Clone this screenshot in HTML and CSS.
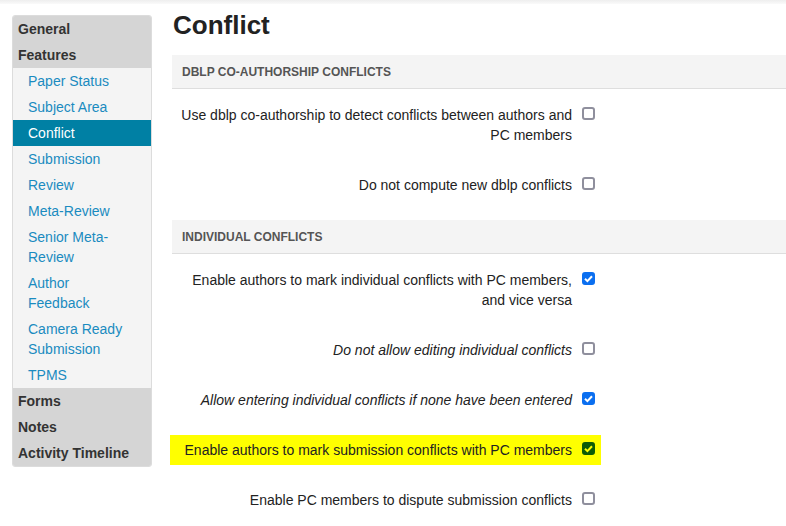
FILE: index.html
```html
<!DOCTYPE html>
<html lang="en">
<head>
  <meta charset="UTF-8" />
  <title>Conflict settings</title>
  <link rel="stylesheet" href="styles.css">
</head>
<body>

  <div class="topbar"></div>

  <div class="page">

    <!-- Settings navigation -->
    <ul class="sidenav">
      <li class="group">General</li>
      <li class="group">Features</li>
      <li class="item"><a href="#">Paper Status</a></li>
      <li class="item"><a href="#">Subject Area</a></li>
      <li class="item active"><a href="#">Conflict</a></li>
      <li class="item"><a href="#">Submission</a></li>
      <li class="item"><a href="#">Review</a></li>
      <li class="item"><a href="#">Meta-Review</a></li>
      <li class="item"><a href="#">Senior Meta-Review</a></li>
      <li class="item"><a href="#">Author Feedback</a></li>
      <li class="item"><a href="#">Camera Ready Submission</a></li>
      <li class="item"><a href="#">TPMS</a></li>
      <li class="group">Forms</li>
      <li class="group">Notes</li>
      <li class="group">Activity Timeline</li>
    </ul>

    <!-- Main settings -->
    <div class="main">
      <h1>Conflict</h1>

      <div class="section">
        <div class="section-head">DBLP Co-Authorship Conflicts</div>
        <div class="row">
          <label class="label">Use dblp co-authorship to detect conflicts between authors and PC members</label>
          <span class="check"></span>
        </div>
        <div class="row">
          <label class="label">Do not compute new dblp conflicts</label>
          <span class="check"></span>
        </div>
      </div>

      <div class="section">
        <div class="section-head">Individual Conflicts</div>
        <div class="row">
          <label class="label">Enable authors to mark individual conflicts with PC members, and vice versa</label>
          <span class="check on"><svg viewBox="0 0 13 13"><path d="M3 6.8l2.4 2.3L10 4.2"/></svg></span>
        </div>
        <div class="row">
          <label class="label sub">Do not allow editing individual conflicts</label>
          <span class="check"></span>
        </div>
        <div class="row">
          <label class="label sub">Allow entering individual conflicts if none have been entered</label>
          <span class="check on"><svg viewBox="0 0 13 13"><path d="M3 6.8l2.4 2.3L10 4.2"/></svg></span>
        </div>
        <div class="row">
          <div class="mark">
            <label class="label">Enable authors to mark submission conflicts with PC members</label>
            <span class="check on green"><svg viewBox="0 0 13 13"><path d="M3 6.8l2.4 2.3L10 4.2"/></svg></span>
          </div>
        </div>
        <div class="row">
          <label class="label">Enable PC members to dispute submission conflicts</label>
          <span class="check"></span>
        </div>
      </div>
    </div>

  </div>

</body>
</html>
```

FILE: styles.css
```css
/* Global */
body {
  margin: 0;
  font-family: "Liberation Sans", Arial, sans-serif;
  font-size: 14px;
  color: #333;
  background: #fff;
  overflow: hidden;
}
.topbar {
  height: 4px;
  background: linear-gradient(#eeeeee, #fafafa);
}
.page {
  display: flex;
  align-items: flex-start;
  gap: 20px;
  padding: 6px 0 0 12px;
}
/* Side navigation */
.sidenav {
  list-style: none;
  margin: 5px 0 0;
  padding: 0;
  width: 140px;
  box-sizing: border-box;
  border: 1px solid #dcdcdc;
  border-radius: 3px;
  background: #f4f4f4;
  overflow: hidden;
  flex-shrink: 0;
}
.sidenav li {
  line-height: 20px;
  padding: 3px 6px 3px 5px;
}
.sidenav .group {
  background: #d5d5d5;
  font-weight: bold;
  color: #333;
}
.sidenav .item {
  padding-left: 15px;
  padding-right: 22px;
}
.sidenav .item a {
  color: #1a8bc0;
  text-decoration: none;
}
.sidenav .item.active {
  background: #0080a4;
}
.sidenav .item.active a {
  color: #fff;
}
/* Main column */
.main {
  flex: 1;
  min-width: 0;
}
.main h1 {
  margin: 0 0 15px 1px;
  font-size: 26px;
  line-height: 30px;
  color: #222;
}
.section {
  margin-bottom: 11px;
}
.section-head {
  background: #f4f4f4;
  border-bottom: 1px solid #dedede;
  height: 33px;
  line-height: 34px;
  padding: 0 10px;
  font-size: 12px;
  font-weight: bold;
  text-transform: uppercase;
  color: #555;
}
/* Setting rows */
.row {
  display: flex;
  align-items: flex-start;
  gap: 10px;
  padding: 16px 0 14px;
  line-height: 20px;
}
.label {
  width: 400px;
  text-align: right;
  color: #222;
}
.label.sub {
  font-style: italic;
}
.mark {
  display: flex;
  align-items: flex-start;
  gap: 10px;
  background: #ffff00;
  margin: -5px 0 -5px -2px;
  padding: 5px 6px 5px 2px;
}
.check {
  width: 13px;
  height: 13px;
  box-sizing: border-box;
  margin-top: 2px;
  border: 2px solid #8f8f9d;
  border-radius: 3px;
  background: #fff;
  flex-shrink: 0;
}
.check svg {
  display: block;
  width: 13px;
  height: 13px;
  margin: -2px;
  fill: none;
  stroke: #fff;
  stroke-width: 2;
}
.check.on {
  background: #0b6ff0;
  border-color: #0b6ff0;
}
.check.green {
  background: #0e5c06;
  border-color: #0e5c06;
}
.check.green svg {
  stroke: #ffff00;
}
```
